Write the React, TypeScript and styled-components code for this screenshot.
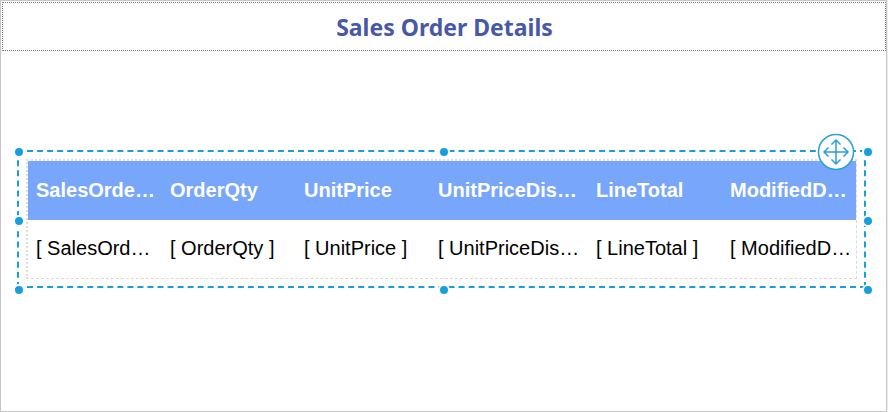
import React from "react";
import styled, { createGlobalStyle } from "styled-components";

const GlobalStyle = createGlobalStyle`
  * { box-sizing: border-box; }
  html, body { margin: 0; background: #ececec; overflow: hidden; }
`;

const Canvas = styled.main`
  width: 887px;
  height: 412px;
  padding: 1px 0 0 1px;
  border: 1px solid #c6c6c6;
  background: #fff;
`;

const ReportHeader = styled.header`
  display: flex;
  align-items: center;
  justify-content: center;
  width: 884px;
  height: 49px;
  border: 1px dotted #7a7a7a;
`;

const Title = styled.h1`
  margin: 0;
  padding: 1px 0 0 1px;
  color: #4759a6;
  font: bold 23px/32px "Noto Sans", "Open Sans", sans-serif;
  white-space: nowrap;
`;

const Selection = styled.section`
  position: relative;
  width: 849px;
  height: 138px;
  margin: 99px 0 0 15px;
  padding: 7px;
  border: 2px dashed #189fdb;
`;

const Handle = styled.span<{ $x: number; $y: number }>`
  position: absolute;
  left: ${(p) => p.$x}px;
  top: ${(p) => p.$y}px;
  width: 12px;
  height: 12px;
  border: 2px solid #fff;
  border-radius: 50%;
  background: #189fdb;
`;

const MoveHandle = styled.div`
  position: absolute;
  left: 798px;
  top: -19px;
  width: 38px;
  height: 38px;
`;

const TableFrame = styled.div`
  width: 831px;
  height: 120px;
  border: 2px dotted #dedede;
  border-right: 1px dashed #dadada;
  border-bottom: 1px dashed #dadada;
`;

const Row = styled.div<{ $head?: boolean }>`
  display: grid;
  grid-template-columns: 134px 134px 134px 158px 134px 134px;
  height: ${(p) => (p.$head ? 59 : 58)}px;
  padding-top: ${(p) => (p.$head ? 17 : 16)}px;
  background: ${(p) => (p.$head ? "#78a6fb" : "#fff")};
  color: ${(p) => (p.$head ? "#fff" : "#000")};
  font: ${(p) => (p.$head ? "bold" : "normal")} 20px/24px "Liberation Sans", Arial, sans-serif;
`;

const Cell = styled.div`
  padding-left: 8px;
  white-space: nowrap;
`;

const columns = [
  { heading: "SalesOrde…", field: "[ SalesOrd…" },
  { heading: "OrderQty", field: "[ OrderQty ]" },
  { heading: "UnitPrice", field: "[ UnitPrice ]" },
  { heading: "UnitPriceDis…", field: "[ UnitPriceDis…" },
  { heading: "LineTotal", field: "[ LineTotal ]" },
  { heading: "ModifiedD…", field: "[ ModifiedD…" },
];

const handles = [
  [-6, -6], [418.5, -6], [843, -6],
  [-6, 63], [843, 63],
  [-6, 132], [418.5, 132], [843, 132],
];

export default function App() {
  return (
    <>
      <GlobalStyle />
      <Canvas>
        <ReportHeader>
          <Title>Sales Order Details</Title>
        </ReportHeader>
        <Selection>
          <TableFrame>
            <Row $head>
              {columns.map(({ heading }) => <Cell key={heading}>{heading}</Cell>)}
            </Row>
            <Row>
              {columns.map(({ field }) => <Cell key={field}>{field}</Cell>)}
            </Row>
          </TableFrame>
          {handles.map(([x, y]) => <Handle key={`${x}:${y}`} $x={x} $y={y} />)}
          <MoveHandle>
            <svg width="38" height="38" viewBox="0 0 38 38" fill="none" stroke="#2c9fd6">
              <circle cx="19" cy="19" r="17.5" fill="#fff" strokeWidth="1.5" />
              <path d="M19 7v24M7 19h24M14.5 11.5L19 7l4.5 4.5M14.5 26.5L19 31l4.5-4.5M11.5 14.5L7 19l4.5 4.5M26.5 14.5L31 19l-4.5 4.5" strokeWidth="1.5" />
            </svg>
          </MoveHandle>
        </Selection>
      </Canvas>
    </>
  );
}
